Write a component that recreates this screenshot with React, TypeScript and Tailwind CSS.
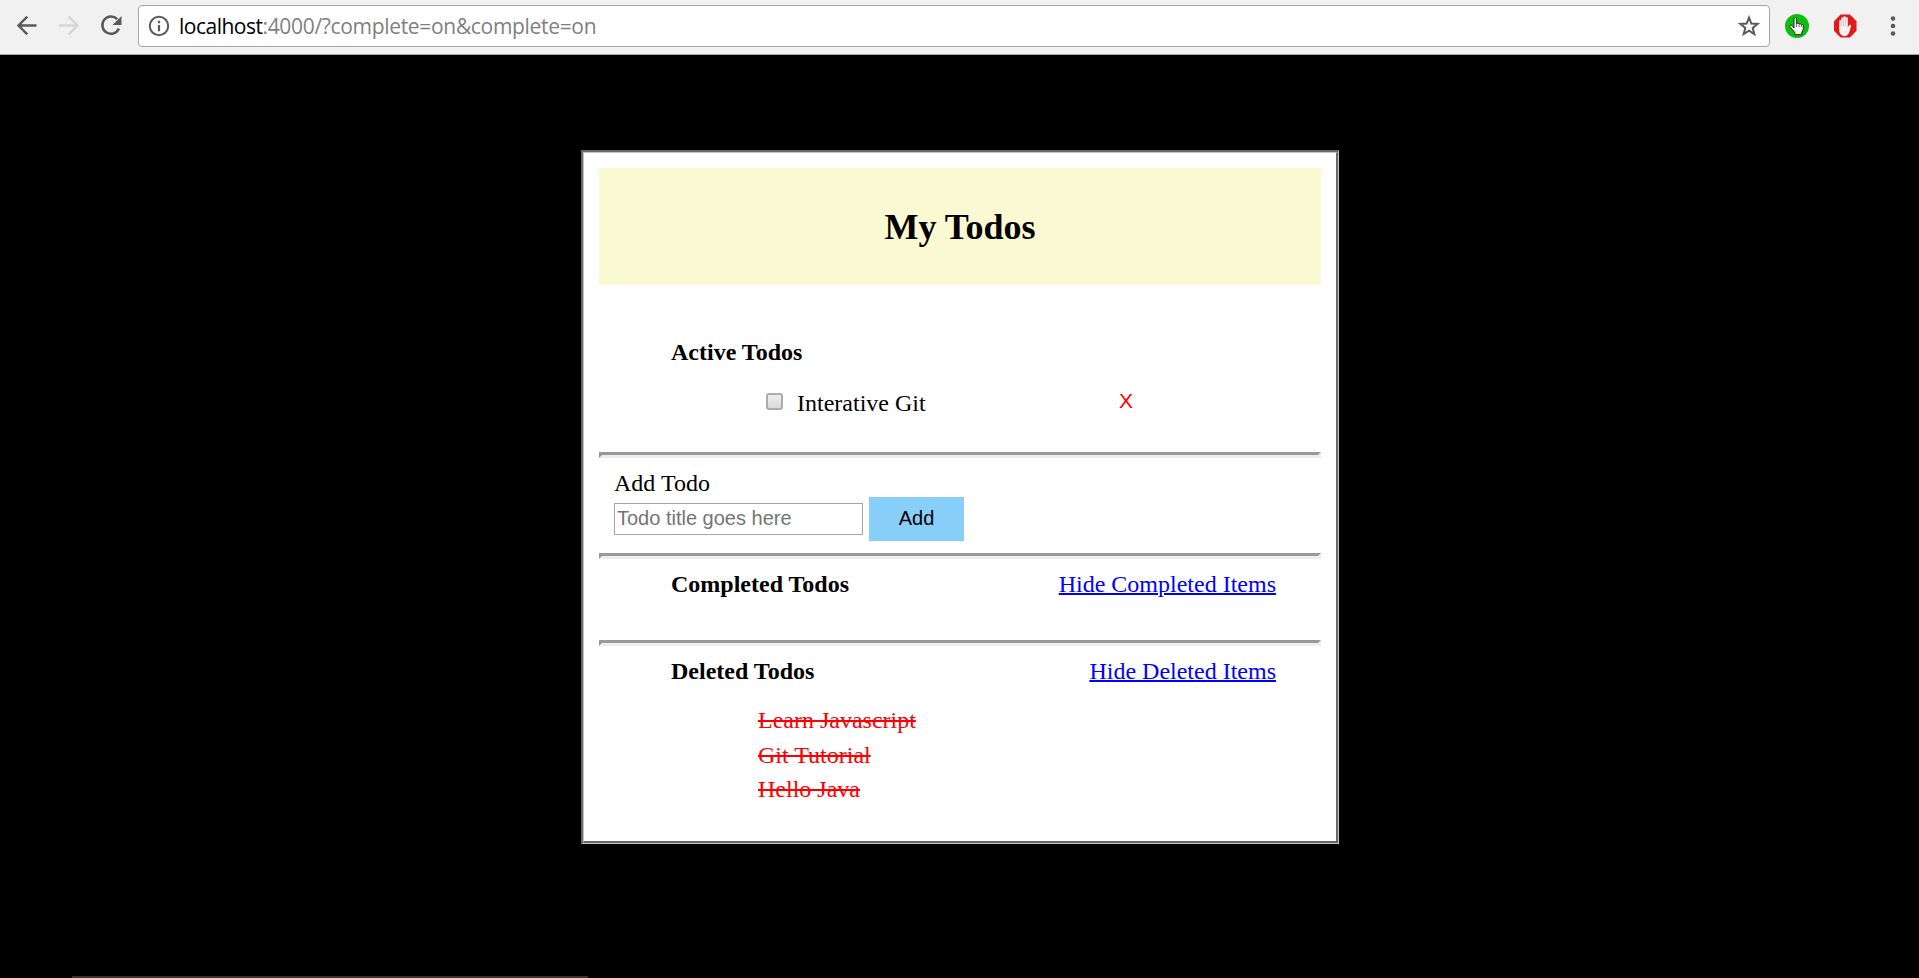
const deletedTodos = ["Learn Javascript", "Git Tutorial", "Hello Java"];

function Toolbar() {
  return (
    <header className="flex h-[55px] shrink-0 items-start border-b border-[#a9a9a9] bg-[#f1f1f1] pt-[5px]">
      <svg className="mt-[5px] ml-3 h-8 w-[30px]" viewBox="0 0 30 32" fill="none" stroke="#5a5a5a" strokeWidth="2.4">
        <path d="M24.500 15.500H7M15.300 6.700L6.500 15.500l8.800 8.800" />
      </svg>
      <svg className="mt-[5px] ml-3 h-8 w-[30px]" viewBox="0 0 30 32" fill="none" stroke="#d6d6d6" strokeWidth="2.4">
        <path d="M5 15.500h18M14.700 6.700l8.800 8.800-8.800 8.800" />
      </svg>
      <svg className="mt-[5px] ml-3 h-8 w-[30px]" viewBox="0 0 30 32" fill="none">
        <path d="M21.200 9.200A8.600 8.600 0 1 0 22.900 18.500" stroke="#5a5a5a" strokeWidth="2.500" />
        <path d="M25.500 6v9h-9z" fill="#5a5a5a" />
      </svg>
      <div className="ml-3 flex h-[42px] w-[1632px] items-center rounded-[4px] border border-[#a6a6a6] bg-white">
        <svg className="ml-[9px] h-[22px] w-[22px]" viewBox="0 0 22 22" fill="none">
          <circle cx="11" cy="11" r="9.200" stroke="#5a5a5a" strokeWidth="2" />
          <path d="M11 10v6.200M11 5.800v2.400" stroke="#5a5a5a" strokeWidth="2.200" />
        </svg>
        <div className="ml-[9px] font-['Open_Sans','Noto_Sans',sans-serif] text-[21px] leading-[40px] tracking-[-0.32px] text-[#808080]">
          <span className="tracking-[-0.5px] text-black">localhost</span>:4000/?complete=on&amp;complete=on
        </div>
        <svg className="mr-[9px] ml-auto h-[22px] w-[22px]" viewBox="0 0 22 22" fill="none" stroke="#5a5a5a" strokeWidth="2">
          <path d="M11 2.600l2.300 5.900 6.300.4-4.900 4 1.600 6.100L11 15.600 5.700 19l1.600-6.100-4.900-4 6.300-.4z" />
        </svg>
      </div>
      <svg className="mt-[9px] ml-[15px] h-6 w-6" viewBox="0 0 24 24">
        <circle cx="12" cy="12" r="12" fill="#0bbf0b" />
        <path
          d="M9 14V5.200c0-2 2.600-2 2.600 0v4.600c.4-1 2.300-.8 2.500.4.600-.8 2.100-.4 2.300.6.800-.5 2 0 2 1.200 0 3.500-.3 4.200-1.600 6.200v2.500H9.800v-2.100L5 12.800c-.8-1.500.8-2.400 1.900-1.300z"
          fill="#fff"
          stroke="#222"
          strokeWidth="1"
        />
        <path d="M11.600 10v3M14.100 10.500v2.500M16.400 11v2" stroke="#222" strokeWidth=".7" />
      </svg>
      <svg className="mt-[9px] ml-6 h-6 w-6" viewBox="0 0 24 24">
        <path d="M7.500.500h9.500L23.500 7.200v9.600L17 23.500H7.500L1 16.800V7.200z" fill="#e5191c" />
        <path
          d="M6.200 7.300c0-1.400 2-1.400 2 0V4.600c0-1.400 2.200-1.400 2.200 0V3.200c0-1.400 2.200-1.400 2.200 0v1.100c0-1.400 2.200-1.400 2.200 0V13.500c1-2 1.500-3 2.500-2.800 1.300.2.800 1.500.4 2.600-1.100 3.700-1.900 8.700-5.600 8.700-4.200 0-5.900-2.500-5.900-6.500z"
          fill="#f6f2f2"
        />
        <path d="M8.200 6.500v6M10.400 4.500v7.500M12.600 4.500v7.500" stroke="#d9a0a0" strokeWidth=".6" />
      </svg>
      <svg className="mt-[9px] ml-7 h-6 w-4" viewBox="0 0 16 24" fill="#5a5a5a">
        <circle cx="8" cy="4.500" r="2.300" />
        <circle cx="8" cy="12" r="2.300" />
        <circle cx="8" cy="19.500" r="2.300" />
      </svg>
    </header>
  );
}

function Divider() {
  return <hr className="h-[6px] border-[3px] border-t-[#999] border-r-[#eee] border-b-[#eee] border-l-[#999]" />;
}

export default function App() {
  return (
    <div className="flex h-[978px] flex-col overflow-hidden bg-black">
      <Toolbar />
      <main className="flex grow flex-col font-['Liberation_Serif',serif] text-[24px] leading-[34px] text-black">
        <div className="mt-[95px] ml-[581px] flex h-[694px] w-[758px] border-t-2 border-r border-b border-l-2 border-t-[#696969] border-r-[#c4c4c4] border-b-[#c4c4c4] border-l-[#696969]">
          <div className="grow border-t border-r-2 border-b-2 border-l border-t-[#c4c4c4] border-r-[#696969] border-b-[#696969] border-l-[#c4c4c4] bg-white p-[15px]">
            <h1 className="h-[117px] bg-[#fafad2] text-center text-[36px] leading-[118px] font-bold">My Todos</h1>

            <section className="h-[167px] pt-[50px] pl-[72px]">
              <h2 className="font-bold">Active Todos</h2>
              <div className="mt-[17px] flex items-start pl-[95px]">
                <span className="mt-[7px] h-[17px] w-[17px] rounded-[3px] border-2 border-[#acacac] bg-linear-to-b from-[#eee] to-[#d9d9d9]" />
                <span className="ml-[14px] w-[322px]">Interative Git</span>
                <button className="font-['Liberation_Sans',sans-serif] text-[21px] leading-[30px] text-[#f00]">X</button>
              </div>
            </section>

            <Divider />
            <form className="h-[95px] pt-2 pl-[15px]">
              <label className="block h-[31px]">Add Todo</label>
              <div className="flex items-center font-['Liberation_Sans',sans-serif] text-[20px]">
                <input
                  className="h-8 w-[249px] border border-[#a6a6a6] bg-white pb-[2px] pl-[2px] leading-[24px] placeholder:text-[#757575]"
                  placeholder="Todo title goes here"
                />
                <button type="button" className="ml-[6px] h-11 w-[95px] bg-[#87cefa] pb-[2px] leading-[24px]">
                  Add
                </button>
              </div>
            </form>

            <Divider />
            <section className="flex h-[81px] justify-between pt-2 pr-[45px] pl-[72px]">
              <h2 className="font-bold">Completed Todos</h2>
              <a className="text-[#00f] underline decoration-2">Hide Completed Items</a>
            </section>

            <Divider />
            <section>
              <div className="flex justify-between pt-2 pr-[45px] pl-[72px]">
                <h2 className="font-bold">Deleted Todos</h2>
                <a className="text-[#00f] underline decoration-2">Hide Deleted Items</a>
              </div>
              <ul className="mt-[15px] pl-[159px] leading-[34.5px] text-[#f00] line-through decoration-2">
                {deletedTodos.map((title) => (
                  <li key={title}>{title}</li>
                ))}
              </ul>
            </section>
          </div>
        </div>
        <div className="mt-auto ml-[72px] h-[2px] w-[516px] bg-[#383434]" />
      </main>
    </div>
  );
}
